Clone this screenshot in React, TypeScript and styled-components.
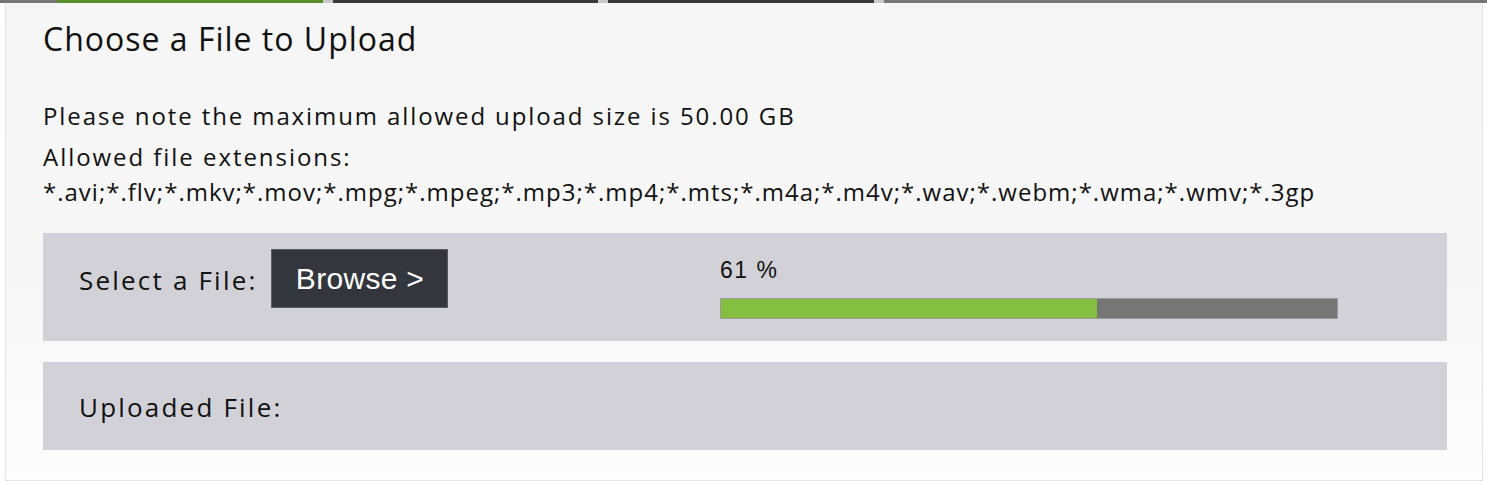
import styled, { createGlobalStyle } from "styled-components"

// Styles
const GlobalStyle = createGlobalStyle`
  html, body { margin: 0; padding: 0; background: #ffffff; }
  body { font-family: "Open Sans", "Noto Sans", sans-serif; color: #111; }
`
const Page = styled.div`
  width: 1487px;
  height: 484px;
  overflow: hidden;
`
const TabStrip = styled.div`
  display: flex;
  height: 3px;
  background: #767676;
`
const TabEdge = styled.div<{ $color: string; $width: number }>`
  width: ${p => p.$width}px;
  background: ${p => p.$color};
  border-right: 10px solid #c9c9c9;
`
const TabGap = styled.div`
  width: 57px;
`
const Panel = styled.section`
  margin: 0 4px 0 5px;
  height: 478px;
  box-sizing: border-box;
  border: 1px solid #e4e4e4;
  border-top: none;
  background: linear-gradient(to bottom, #f6f6f6 0%, #f8f8f8 70%, #fdfdfd 100%);
  padding: 17px 35px 0 37px;
`
const Title = styled.h2`
  margin: 0;
  font-size: 32px;
  font-weight: 400;
  letter-spacing: 1px;
  line-height: 38px;
`
const Note = styled.p`
  margin: 45px 0 0;
  font-size: 24px;
  letter-spacing: 1.9px;
  line-height: 26px;
`
const Extensions = styled.p`
  margin: 10px 0 0;
  font-size: 24px;
  line-height: 35px;
`
const ExtLine = styled.span<{ $spacing: number }>`
  display: block;
  letter-spacing: ${p => p.$spacing}px;
`
const GreyBox = styled.div<{ $height: number }>`
  display: grid;
  grid-template-columns: 641px 618px;
  height: ${p => p.$height}px;
  box-sizing: border-box;
  background: #d2d1d7;
  padding: 0 36px;
`
const SelectBox = styled(GreyBox)`
  margin-top: 24px;
  align-items: start;
  padding-top: 16px;
`
const UploadedBox = styled(GreyBox)`
  margin-top: 21px;
  align-items: center;
`
const FileField = styled.div`
  display: flex;
  align-items: center;
`
const Label = styled.span`
  font-size: 26px;
  letter-spacing: 2.2px;
  margin-top: 2px;
`
const BrowseButton = styled.button`
  margin-left: 14px;
  width: 177px;
  height: 59px;
  border: 1px solid #5a5c62;
  background: #33363d;
  color: #fff;
  font-family: "Liberation Sans", Arial, sans-serif;
  font-size: 30px;
  letter-spacing: 0.3px;
  cursor: pointer;
`
const Progress = styled.div`
  margin-top: 9px;
  display: flex;
  flex-direction: column;
`
const Percent = styled.span`
  font-family: "Liberation Sans", Arial, sans-serif;
  font-size: 23px;
  letter-spacing: 1.5px;
  line-height: 24px;
`
const Track = styled.div`
  margin-top: 16px;
  width: 618px;
  height: 21px;
  box-sizing: border-box;
  border: 1px solid #9a9a9a;
  background: #767676;
`
const Fill = styled.div`
  height: 100%;
  background: #84bf41;
`

const progress = 61

const App: React.FC = () => {
  return (
    <Page>
      <GlobalStyle />
      <TabStrip>
        <TabGap />
        <TabEdge $color="#5a8f2a" $width={266} />
        <TabEdge $color="#3a3a3a" $width={265} />
        <TabEdge $color="#3a3a3a" $width={266} />
      </TabStrip>
      <Panel>
        <Title>Choose a File to Upload</Title>
        <Note>Please note the maximum allowed upload size is 50.00 GB</Note>
        <Extensions>
          <ExtLine $spacing={1.95}>Allowed file extensions:</ExtLine>
          <ExtLine $spacing={1.0}>
            *.avi;*.flv;*.mkv;*.mov;*.mpg;*.mpeg;*.mp3;*.mp4;*.mts;*.m4a;*.m4v;*.wav;*.webm;*.wma;*.wmv;*.3gp
          </ExtLine>
        </Extensions>
        <SelectBox $height={108}>
          <FileField>
            <Label>Select a File:</Label>
            <BrowseButton>Browse &gt;</BrowseButton>
          </FileField>
          <Progress>
            <Percent>{progress} %</Percent>
            <Track>
              <Fill style={{ width: `${progress}%` }} />
            </Track>
          </Progress>
        </SelectBox>
        <UploadedBox $height={88}>
          <Label>Uploaded File:</Label>
        </UploadedBox>
      </Panel>
    </Page>
  )
}

export default App
